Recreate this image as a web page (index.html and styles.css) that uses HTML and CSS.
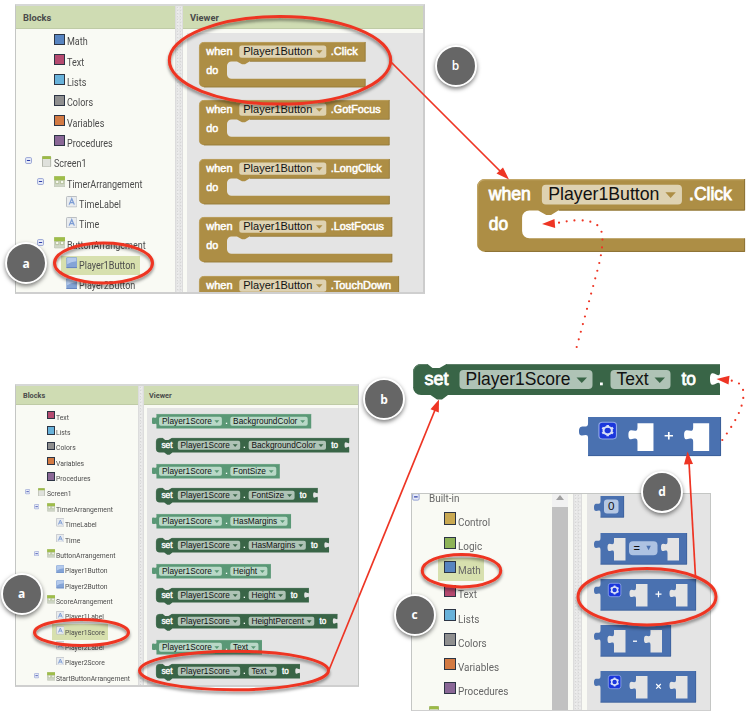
FILE: index.html
```html
<!DOCTYPE html>
<html lang="en">
<head>
<meta charset="utf-8">
<title>Blocks guide</title>
<link rel="stylesheet" href="styles.css">
</head>
<body>
<svg class="defs" aria-hidden="true">
  <symbol id="i-screen" viewBox="0 0 12 12"><rect x=".5" y=".5" width="8.5" height="11" rx=".8" fill="#dfe1dc" stroke="#a9ada1" stroke-width=".9"/><path d="M.3.3h9v2.700h-9z" fill="#9cbb45"/></symbol>
  <symbol id="i-arr" viewBox="0 0 12 12"><rect x=".3" y=".3" width="11.400" height="11.400" rx="1" fill="#cfd6c6" stroke="#b3baa9" stroke-width=".6"/><path d="M.2.2h11.600v4.300H.2z" fill="#9fbe49"/><path d="M1.700 4.600h3.300v3.300H1.700zM6.800 4.600h3.300v3.300H6.800z" fill="#f6f8f0" stroke="#a5b487" stroke-width=".7"/></symbol>
  <symbol id="i-label" viewBox="0 0 12 12"><rect x=".5" y=".5" width="11" height="11" rx="1" fill="#e9ecef" stroke="#b0b4b9" stroke-width=".9"/><path d="M3.300 9 6 2.800 8.700 9M4.300 7h3.400" fill="none" stroke="#7c9cd4" stroke-width="1.300"/></symbol>
  <symbol id="i-button" viewBox="0 0 12 12"><rect x=".3" y=".3" width="11.400" height="11.400" rx="1" fill="#84a4d6"/><path d="M1.200 1h9.600v3.500Q5 5 1.200 7.500z" fill="#b4caec"/><path d="M.5 11h11" stroke="#6484be"/></symbol>
  <symbol id="i-minus" viewBox="0 0 8 8"><rect x=".6" y=".6" width="6.300" height="6.300" rx="1.200" fill="#e8ecf8" stroke="#8d9ad0" stroke-width=".9"/><path d="M2 3.750h3.500" stroke="#3040a8" stroke-width="1.100"/></symbol>
</svg>

<main class="canvas">
  <section class="panel panel-button">
    <div class="tree-col">
      <h2>Blocks</h2>
      <div class="tree" data-tree="button"></div>
    </div>
    <div class="divider"></div>
    <div class="view-col">
      <h2>Viewer</h2>
      <div class="workspace" data-stack="when"></div>
    </div>
  </section>

  <section class="panel panel-score">
    <div class="tree-col">
      <h2>Blocks</h2>
      <div class="tree" data-tree="score"></div>
    </div>
    <div class="divider"></div>
    <div class="view-col">
      <h2>Viewer</h2>
      <div class="workspace" data-stack="props"></div>
    </div>
  </section>

  <section class="panel panel-math">
    <div class="tree-col">
      <div class="tree" data-tree="builtin"></div>
    </div>
    <div class="scrollbar"><span class="up"></span></div>
    <div class="divider"></div>
    <div class="view-col">
      <div class="workspace" data-stack="math"></div>
    </div>
  </section>

  <div class="node node-when"></div>
  <div class="node node-set"></div>
  <div class="node node-plus"></div>

  <svg class="marks" width="754" height="714" viewBox="0 0 754 714">
    <defs>
      <filter id="sh" x="-20%" y="-30%" width="140%" height="170%"><feDropShadow dx="0" dy="2.5" stdDeviation="1.8" flood-color="#000" flood-opacity=".45"/></filter>
    </defs>
    <g fill="none" stroke="#ee3524" stroke-width="3" filter="url(#sh)">
      <ellipse cx="280" cy="60.3" rx="110.7" ry="43.8"/>
      <ellipse cx="103.5" cy="263" rx="49" ry="20"/>
      <ellipse cx="81.5" cy="632.5" rx="47" ry="13"/>
      <ellipse cx="234" cy="670.5" rx="94.5" ry="19.3"/>
      <ellipse cx="461.5" cy="570.7" rx="39.3" ry="16.3"/>
      <ellipse cx="647" cy="596.7" rx="69" ry="28.2"/>
    </g>
    <g fill="none" stroke="#ee3524" stroke-width="1.7">
      <path d="M391 62 501 172"/>
      <path d="M329 670 435 410"/>
      <path d="M695.5 577 689 462"/>
    </g>
    <g fill="#ee3524">
      <path d="M509 179.500 496.500 173.500 503 167.500z"/>
      <path d="M439 399.500 438.800 412.500 430.500 409.200z"/>
      <path d="M687.500 451.500 693 464 684 464.500z"/>
      <path d="M542 224 554.500 219 555.200 228z"/>
      <path d="M716.500 379 729.500 375.700 728.500 384.500z"/>
    </g>
    <g fill="none" stroke="#ee3524" stroke-width="2.200" stroke-linecap="round" stroke-dasharray="0 7.900">
      <path d="M576.700 347 597.700 269.300C601 257 602.500 247 602.500 239 602.500 225 594 220.500 579 220.300 570 220.300 564 222 556 223.200"/>
      <path d="M722.300 440C733 425 743.500 409 743.500 394 743.500 385 738 381 729 380.300"/>
    </g>
  </svg>

  <span class="badge a1">a</span>
  <span class="badge b1">b</span>
  <span class="badge b2">b</span>
  <span class="badge a2">a</span>
  <span class="badge c1">c</span>
  <span class="badge d1">d</span>
</main>
<script src="blocks.js"></script>
</body>
</html>
```
FILE: styles.css
```css
* { box-sizing: border-box; }
body { margin: 0; background: #fff; font-family: Roboto, "Liberation Sans", sans-serif; }
.defs { position: absolute; width: 0; height: 0; }
.canvas { position: relative; width: 754px; height: 714px; overflow: hidden; }

.panel {
  position: absolute;
  display: flex;
  overflow: hidden;
  background: #f9faf4;
  border: 1px solid #c4c6c4;
  border-bottom: 2px solid #cfcfcf;
}
.panel h2 {
  margin: 0;
  flex: none;
  background: #cfdcb3;
  border-bottom: 1px solid #bfcba6;
  color: #4a4a4a;
  font-weight: 700;
  white-space: nowrap;
}
.tree-col, .view-col { display: flex; flex-direction: column; flex: none; overflow: hidden; }
.view-col { flex: 1; }
.workspace { flex: 1; background: #e4e4e4; overflow: hidden; display: flex; flex-direction: column; }
.workspace svg { flex: none; }
.divider {
  flex: none;
  background-color: #e5e5e5;
  background-image: radial-gradient(circle, #d6d6d6 .6px, transparent 1px), radial-gradient(circle, #efefef .6px, transparent 1px);
  background-size: 3px 3px, 4px 4px;
  border-left: 1px solid #dcdcdc;
  border-right: 1px solid #dcdcdc;
}

.panel-button { left: 15px; top: 4px; width: 410px; height: 290px; border-top: 2px solid #d6d8d6; border-right: 2px solid #cccccc; font-size: 10px; }
.panel-button .tree-col { width: 159px; }
.panel-button .divider { width: 8px; }
.panel-button h2 { height: 23px; line-height: 23px; padding-left: 7px; font-size: 9.3px; }
.panel-button .tree { padding: 2.4px 0 0 8.800px; }
.panel-button .workspace { margin: 4px 0 0 4px; padding: 8.5px 0 0 12px; }

.panel-score { left: 15px; top: 384px; width: 344px; height: 303px; border-top: 2px solid #d6d8d6; font-size: 7.55px; }
.panel-score .tree-col { width: 122px; }
.panel-score .divider { width: 6px; }
.panel-score h2 { height: 19px; line-height: 20px; padding-left: 7px; font-size: 7.3px; }
.panel-score .view-col h2 { padding-left: 5px; }
.panel-score .tree { padding: 4.3px 0 0 8.700px; }
.panel-score .workspace { margin: 3px 0 0 3px; padding: 6px 0 0 4.500px; }

.panel-math { left: 411px; top: 493px; width: 300px; height: 218px; font-size: 11px; border-bottom-width: 1px; }
.panel-math .tree-col { width: 140px; }
.panel-math .divider { width: 9px; margin-left: 5px; }
.panel-math .workspace { margin-left: 5px; padding: 2.3px 0 0 7px; }
.panel-math .tree { margin-top: -9px; padding-left: 0; }
.scrollbar { flex: none; width: 16px; background: #c1c1c1; }
.scrollbar .up { display: flex; height: 13px; background: #f1f1f1; justify-content: center; padding-top: 1px; }
.scrollbar .up::before { content: ""; width: 0; height: 0; border: 4px solid transparent; border-top-width: 0; border-bottom: 5px solid #a0a0a0; }

.row { display: flex; align-items: center; height: 2.035em; color: #4c4c4c; }
.panel-math .row { height: 24.2px; color: #666; }
.l1 { padding-left: 1.2em; }
.l2 { padding-left: 2.4em; }
.tog { flex: none; width: 1.700em; height: .75em; display: flex; margin-bottom: .5em; }
.tog svg { width: .75em; height: .75em; }
.item { display: flex; align-items: center; white-space: nowrap; height: 1.85em; }
.item.selected { background: #d7e0ae; width: 7.9em; margin-left: -.5em; padding-left: .5em; }
.panel-score .item.selected { height: 2.2em; width: 7.5em; }
.panel-math .item.selected { width: 4.14em; height: 2.05em; }
.ico { flex: none; width: 1.300em; height: 1.150em; margin-bottom: .45em; display: flex; }
.ico svg { width: 1.150em; height: 1.150em; }
.ico.narrow { width: 1.200em; }
.ico i { width: 1.100em; height: 1.100em; border: 1px solid #2d3544; }
.txt { display: block; font-size: 1.020em; transform: scaleX(.885); transform-origin: left; padding-top: .05em; }
.panel-math .tog { width: 1.500em; margin-bottom: 0; }
.panel-math .l1 { padding-left: 1.380em; }
.panel-math .txt { padding-top: .180em; }

.node { position: absolute; display: flex; }
.node-when { left: 477px; top: 179.300px; }
.node-set { left: 412.500px; top: 363.500px; }
.node-plus { left: 579px; top: 417px; }
.block { display: block; overflow: visible; }
.block text { font-family: "Liberation Sans", Arial, sans-serif; }
.block .lt { fill: #fff; stroke: #fff; stroke-width: .045em; }
.block .dk { fill: #111; }
.shift { margin-left: 4.500px; }

.marks { position: absolute; left: 0; top: 0; }
.badge {
  position: absolute;
  width: 42px; height: 42px;
  margin: -21px 0 0 -21px;
  border-radius: 50%;
  border: 2.500px solid #fff;
  background: #666;
  color: #fff;
  box-shadow: 0 2px 4px rgba(0,0,0,.5);
  display: flex; align-items: center; justify-content: center;
  font: 700 12px "Open Sans", sans-serif;
}
.a1 { left: 26px; top: 263px; }
.b1 { left: 455.500px; top: 65.500px; font-weight: 600; }
.b2 { left: 384px; top: 399.300px; }
.a2 { left: 21.500px; top: 593.500px; }
.c1 { left: 414.500px; top: 614.500px; }
.d1 { left: 662px; top: 491.500px; }
```
FILE: blocks.js
```js
const COLORS = { Control: '#c9a953', Logic: '#8db357', Math: '#5784c0', Text: '#b54a70', Lists: '#68b2da', Colors: '#8f8f8f', Variables: '#d37a43', Procedures: '#8a6796' };

// [level, label, icon, has toggle, selected]
const TREES = {
  button: [
    [1, 'Math'], [1, 'Text'], [1, 'Lists'], [1, 'Colors'], [1, 'Variables'], [1, 'Procedures'],
    [0, 'Screen1', 'screen', 1], [1, 'TimerArrangement', 'arr', 1], [2, 'TimeLabel', 'label'], [2, 'Time', 'label'],
    [1, 'ButtonArrangement', 'arr', 1], [2, 'Player1Button', 'button', 0, 1], [2, 'Player2Button', 'button']
  ],
  score: [
    [1, 'Text'], [1, 'Lists'], [1, 'Colors'], [1, 'Variables'], [1, 'Procedures'],
    [0, 'Screen1', 'screen', 1], [1, 'TimerArrangement', 'arr', 1], [2, 'TimeLabel', 'label'], [2, 'Time', 'label'],
    [1, 'ButtonArrangement', 'arr', 1], [2, 'Player1Button', 'button'], [2, 'Player2Button', 'button'],
    [1, 'ScoreArrangement', 'arr', 1], [2, 'Player1Label', 'label'], [2, 'Player1Score', 'label', 0, 1],
    [2, 'Player2Label', 'label'], [2, 'Player2Score', 'label'], [1, 'StartButtonArrangement', 'arr', 1]
  ],
  builtin: [
    [0, 'Built-in', 'none', 1], [1, 'Control'], [1, 'Logic'], [1, 'Math', null, 0, 1], [1, 'Text'], [1, 'Lists'],
    [1, 'Colors'], [1, 'Variables'], [1, 'Procedures'], [0, '', 'screen', 1]
  ]
};

function row([level, label, icon, toggle, selected]) {
  let ico = '';
  if (!icon) ico = `<span class="ico"><i style="background:${COLORS[label]}"></i></span>`;
  else if (icon !== 'none') ico = `<span class="ico${icon === 'screen' ? ' narrow' : ''}"><svg viewBox="0 0 12 12"><use href="#i-${icon}" width="12" height="12"/></svg></span>`;
  return `<div class="row l${level}"><span class="tog">${toggle ? `<svg viewBox="0 0 8 8"><use href="#i-minus" width="8" height="8"/></svg>` : ''}</span>` +
    `<span class="item${selected ? ' selected' : ''}">${ico}<span class="txt">${label}</span></span></div>`;
}

const text = (s, x, y, size, len, cls) =>
  `<text class="${cls}" x="${x}" y="${y}" font-size="${size}" textLength="${len}" lengthAdjust="spacingAndGlyphs">${s}</text>`;
const svg = (w, h, vw, vh, body) =>
  `<svg class="block" width="${w}" height="${h}" viewBox="0 0 ${vw} ${vh}" preserveAspectRatio="none">${body}</svg>`;

function whenBlock(event, len, w, k, slot, headOnly) {
  const d = `M5 0H${w}V19.500H50.500l-4.500 2.800h-3l-5-2.800H32.500a4.500 4.500 0 0 0-4.500 4.500V32.300a4.500 4.500 0 0 0 4.500 4.500H${w}V45.300H5a5 5 0 0 1-5-5V5a5 5 0 0 1 5-5z`;
  return svg(w * k, slot, w, slot / k,
    `<path d="${d}" fill="#ad8e45"/><path d="M.4 41V5A4.600 4.600 0 0 1 5 .4H${w}" fill="none" stroke="#c2a768" stroke-width=".7"/>` +
    `<path d="M${w - .3} 0v19.300H51M${w - .3} 37v8H5" fill="none" stroke="#8c7235" stroke-width=".6"/>` +
    text('when', 7.300, 13.200, 11, 26.200, 'lt') + (headOnly ? '' : text('do', 7.300, 31.700, 11, 12, 'lt')) +
    `<rect x="40.300" y="3.600" width="87" height="12.200" rx="2.500" fill="#ded2b2"/>` +
    text('Player1Button', 44.300, 13.200, 11, 69, 'dk') +
    `<path d="M117 8.300h6.500l-3.250 3.500z" fill="#ad8e45"/>` + text('.' + event, 131.700, 13.200, 11, len, 'lt'));
}

const arrow = (x, c) => `<path d="M${x} 13.500h10.500l-5.250 5.500z" fill="${c}"/>`;

function setBlock(prop, len, k, slot) {
  const b2 = 203.500 + len + 22, w = b2 + 49.500;
  const d = `M8 0H14.500l5 4h7l7-4H${w}V8.500c0 8.500-10-7-10 6.500s10-2 10 6.500V31H35l-6 4.500h-5L17.500 31H8a8 8 0 0 1-8-8V8a8 8 0 0 1 8-8z`;
  return svg(w * k, slot, w, slot / k,
    `<path d="${d}" fill="#396547"/><path d="M.5 23V8A7.500 7.500 0 0 1 8 .5h6.500M34 .5H${w}" fill="none" stroke="#5d8068"/>` +
    text('set', 11.500, 21, 17.500, 24, 'lt') +
    `<rect x="46.500" y="6" width="133" height="19" rx="4" fill="#afc3b6"/>` + text('Player1Score', 52.500, 21, 17.500, 105, 'dk') + arrow(163.500, '#396547') +
    `<rect x="187" y="18.500" width="2.800" height="2.800" fill="#fff"/>` +
    `<rect x="197.500" y="6" width="${b2 - 197.500}" height="19" rx="4" fill="#afc3b6"/>` + text(prop, 203.500, 21, 17.500, len, 'dk') + arrow(203.500 + len + 6, '#396547') +
    text('to', b2 + 11, 21, 17.500, 14.500, 'lt'));
}

function getBlock(prop, len, k, slot) {
  const b2 = 173 + len + 22, w = b2 + 7.500;
  const d = `M9.500 0H${w}V31H9.500V23c0-6-9.500 3-9.500-5V11c0-8 9.500 1 9.500-5z`;
  return svg(w * k, slot, w, slot / k,
    `<path d="${d}" fill="#5a9876"/><path d="M9.500.7H${w}" stroke="#86b79b"/>` +
    `<rect x="15" y="6" width="134" height="19" rx="4" fill="#b9d8c7"/>` + text('Player1Score', 21.500, 21, 17.500, 106, 'dk') + arrow(133, '#5a9876') +
    `<rect x="157.500" y="18.500" width="2.800" height="2.800" fill="#fff"/>` +
    `<rect x="167" y="6" width="${b2 - 167}" height="19" rx="4" fill="#b9d8c7"/>` + text(prop, 173, 21, 17.500, len, 'dk') + arrow(173 + len + 6, '#5a9876'));
}

const socket = x => `M${x} 5h11.500v22.500h-11.500v-7.500c0-6.500-6.500 2.500-6.500-5.500s6.500.5 6.500-6z`;
const gear = `<rect x="14.300" y="4.300" width="12.600" height="13.400" rx="2.500" fill="#1a36dc" stroke="#91a9e8" stroke-width=".8"/>` +
  `<circle cx="20.600" cy="11" r="3" fill="none" stroke="#d5def8" stroke-width="1.500"/>` +
  `<path d="M20.600 6.500v2M20.600 13.500v2M16.700 8.750l1.700 1M22.800 12.250l1.700 1M16.700 13.250l1.700-1M22.800 9.750l1.700-1" stroke="#d5def8" stroke-width="1.800"/>`;

function mathBlock(kind, W, H, slot) {
  const spec = {
    '0': { w: 30, h: 21.500, s: [] },
    '=': { w: 93, h: 31.500, s: [20, 73.500] },
    '+': { w: 102, h: 31.500, s: [42, 82] },
    '-': { w: 77, h: 31.500, s: [20, 56.500] },
    '×': { w: 102, h: 31.500, s: [42, 82] }
  }[kind];
  const { w, h, s } = spec;
  const d = `M6.500 0H${w}V${h}H6.500V17c0-6-6.500 2-6.500-5.500S6.500 11 6.500 5z` + s.map(socket).join('');
  let extra = `<path d="M${w - .3} 0V${h - .3}H6.500" fill="none" stroke="#365a94" stroke-width=".6"/>`;
  if (kind === '0') extra += `<rect x="10" y="3.500" width="14.500" height="14" rx="3" fill="#b5c7e3"/>` + text('0', 14, 14.500, 11.500, 6.500, 'dk');
  if (kind === '=') extra += `<rect x="35" y="8.300" width="28.500" height="14" rx="4" fill="#adc2e2"/>` + text('=', 39.500, 19, 11, 6.500, 'dk') + `<path d="M52.300 12.700h4.500l-2.250 4.500z" fill="#4a71b0"/>`;
  if (kind === '-') extra += `<path d="M39 16.200h4" stroke="#fff" stroke-width="1.300"/>`;
  if (kind === '+') extra += gear + `<path d="M61.500 15.200h6M64.500 12.200v6" stroke="#fff" stroke-width="1.200"/>`;
  if (kind === '×') extra += gear + `<path d="M62.200 13l4.600 4.600M66.800 13l-4.600 4.600" stroke="#fff" stroke-width="1.200"/>`;
  const sx = W || w, sy = H || h, box = slot || sy;
  return svg(sx, box, w, box * h / sy, `<path d="${d}" fill="#4a71b0" fill-rule="evenodd"/>` + extra);
}

const STACKS = {
  when: [['Click', 27, 166.500], ['GotFocus', 50, 190.500], ['LongClick', 51, 190.700], ['LostFocus', 53.300, 193.200], ['TouchDown', 60.300, 200]]
    .map(([e, l, w]) => whenBlock(e, l, w, 1, 58.650, e === 'TouchDown')),
  props: (() => {
    const k = .469, L = { BackgroundColor: 137, FontSize: 70, HasMargins: 94, Height: 51, HeightPercent: 112, Text: 32 };
    const g = p => getBlock(p, L[p], k, 24), s = p => `<div class="shift">${setBlock(p, L[p], k, 26.050)}</div>`;
    return [g('BackgroundColor'), s('BackgroundColor'), g('FontSize'), s('FontSize'), g('HasMargins'), s('HasMargins'),
      g('Height'), s('Height'), s('HeightPercent'), g('Text'), s('Text')];
  })(),
  math: [mathBlock('0', 0, 0, 36.900), ...['=', '+', '-', '×'].map(k => mathBlock(k, 0, 0, 46))]
};

document.querySelectorAll('[data-tree]').forEach(el => { el.innerHTML = TREES[el.dataset.tree].map(row).join(''); });
document.querySelectorAll('[data-stack]').forEach(el => { el.innerHTML = STACKS[el.dataset.stack].join(''); });
document.querySelector('.node-when').innerHTML = whenBlock('Click', 26.600, 166.500, 1.610, 73);
document.querySelector('.node-set').innerHTML = setBlock('Text', 32, 1, 36);
document.querySelector('.node-plus').innerHTML = mathBlock('+', 142, 39);
```
